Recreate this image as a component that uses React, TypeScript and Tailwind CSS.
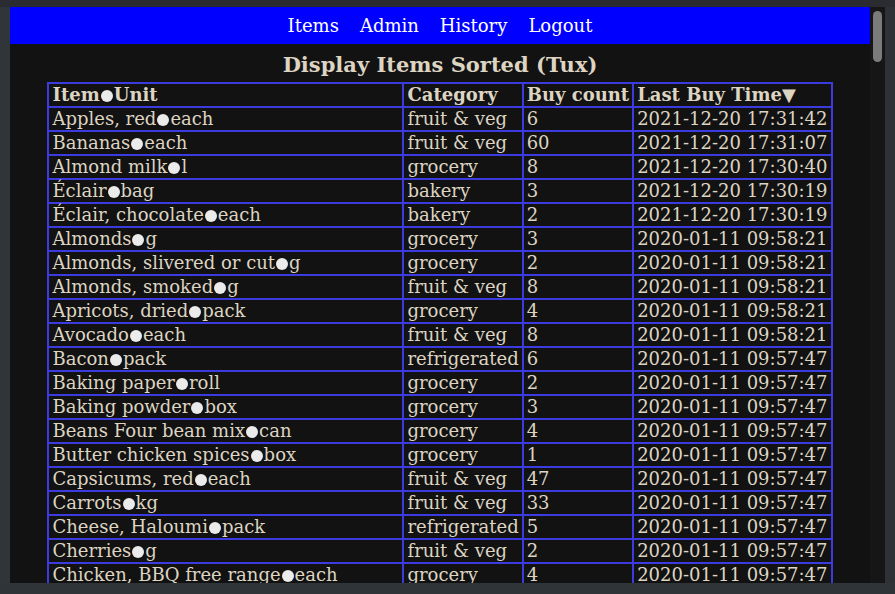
import React from "react";

type Row = { item: string; unit: string; cat: string; count: number; time: string };

const rows: Row[] = [
  { item: "Apples, red", unit: "each", cat: "fruit & veg", count: 6, time: "2021-12-20 17:31:42" },
  { item: "Bananas", unit: "each", cat: "fruit & veg", count: 60, time: "2021-12-20 17:31:07" },
  { item: "Almond milk", unit: "l", cat: "grocery", count: 8, time: "2021-12-20 17:30:40" },
  { item: "Éclair", unit: "bag", cat: "bakery", count: 3, time: "2021-12-20 17:30:19" },
  { item: "Éclair, chocolate", unit: "each", cat: "bakery", count: 2, time: "2021-12-20 17:30:19" },
  { item: "Almonds", unit: "g", cat: "grocery", count: 3, time: "2020-01-11 09:58:21" },
  { item: "Almonds, slivered or cut", unit: "g", cat: "grocery", count: 2, time: "2020-01-11 09:58:21" },
  { item: "Almonds, smoked", unit: "g", cat: "fruit & veg", count: 8, time: "2020-01-11 09:58:21" },
  { item: "Apricots, dried", unit: "pack", cat: "grocery", count: 4, time: "2020-01-11 09:58:21" },
  { item: "Avocado", unit: "each", cat: "fruit & veg", count: 8, time: "2020-01-11 09:58:21" },
  { item: "Bacon", unit: "pack", cat: "refrigerated", count: 6, time: "2020-01-11 09:57:47" },
  { item: "Baking paper", unit: "roll", cat: "grocery", count: 2, time: "2020-01-11 09:57:47" },
  { item: "Baking powder", unit: "box", cat: "grocery", count: 3, time: "2020-01-11 09:57:47" },
  { item: "Beans Four bean mix", unit: "can", cat: "grocery", count: 4, time: "2020-01-11 09:57:47" },
  { item: "Butter chicken spices", unit: "box", cat: "grocery", count: 1, time: "2020-01-11 09:57:47" },
  { item: "Capsicums, red", unit: "each", cat: "fruit & veg", count: 47, time: "2020-01-11 09:57:47" },
  { item: "Carrots", unit: "kg", cat: "fruit & veg", count: 33, time: "2020-01-11 09:57:47" },
  { item: "Cheese, Haloumi", unit: "pack", cat: "refrigerated", count: 5, time: "2020-01-11 09:57:47" },
  { item: "Cherries", unit: "g", cat: "fruit & veg", count: 2, time: "2020-01-11 09:57:47" },
  { item: "Chicken, BBQ free range", unit: "each", cat: "grocery", count: 4, time: "2020-01-11 09:57:47" },
];

function Dot() {
  return <span className="inline-block w-[12px] h-[12px] rounded-full bg-[#ebebeb] align-[-1px] mx-[1px]" />;
}

const cell = "border-2 border-[#3b3be0] px-[3px] py-0 leading-[22px] whitespace-nowrap text-left";

export default function App() {
  return (
    <div className="h-screen w-full bg-[#2b2c31] flex flex-col overflow-hidden" style={{ fontFamily: '"DejaVu Serif", serif' }}>
      <div className="h-[7px] shrink-0" />
      <div className="flex flex-1 min-h-0">
        <div className="w-[10px] shrink-0 bg-[#2f3539]" />
        <div className="w-[875px] h-[576px] flex bg-[#121212]">
          <main className="w-[860px] h-full overflow-hidden text-[#ddd4c2] text-[18px]">
            <nav className="h-[37px] bg-[#0000ff] flex items-center justify-center gap-[21px] text-white">
              <a>Items</a>
              <a>Admin</a>
              <a>History</a>
              <a>Logout</a>
            </nav>
            <h2 className="text-center font-bold text-[21px] leading-[28px] mt-[7px] mb-[3px]">Display Items Sorted (Tux)</h2>
            <table className="mx-auto border-collapse border-2 border-[#3b3be0]">
              <thead>
                <tr>
                  <th className={`${cell} w-[355px]`}>Item<Dot />Unit</th>
                  <th className={`${cell} w-[117px]`}>Category</th>
                  <th className={`${cell} w-[109px]`}>Buy count</th>
                  <th className={`${cell} w-[196px]`}>Last Buy Time▼</th>
                </tr>
              </thead>
              <tbody>
                {rows.map((r, i) => (
                  <tr key={i}>
                    <td className={cell}>{r.item}<Dot />{r.unit}</td>
                    <td className={cell}>{r.cat}</td>
                    <td className={cell}>{r.count}</td>
                    <td className={cell}>{r.time}</td>
                  </tr>
                ))}
              </tbody>
            </table>
          </main>
          <div className="w-[15px] h-full bg-[#161616] flex justify-center pt-[4px]">
            <div className="w-[9px] h-[51px] rounded-full bg-[#7b7b7b]" />
          </div>
        </div>
        <div className="flex-1 bg-[#2e3236]" />
      </div>
      <div className="h-[11px] shrink-0 bg-[#2f3438]" />
    </div>
  );
}
